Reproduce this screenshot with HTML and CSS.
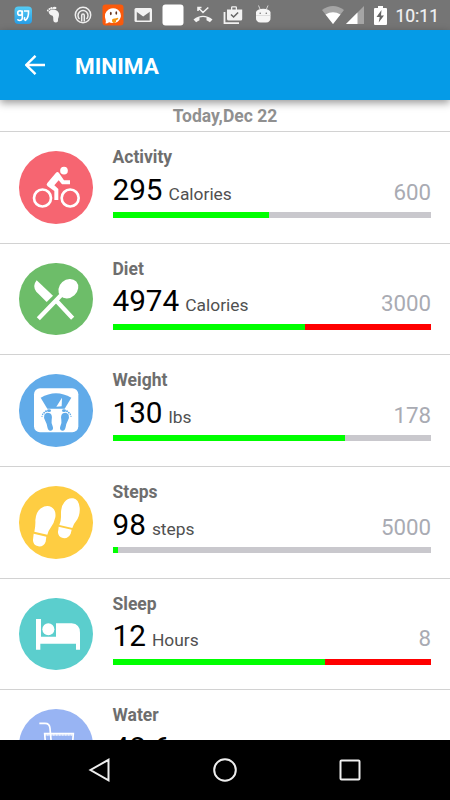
FILE: index.html
```html
<!DOCTYPE html>
<html lang="en">
<head>
  <meta charset="UTF-8">
  <title>Minima</title>
  <link rel="stylesheet" href="styles.css">
</head>
<body>
  <!-- status bar -->
  <div class="status">
    <div class="notifications">
      <svg viewBox="0 0 30 30"><defs><linearGradient id="blue" x2="0" y2="1"><stop stop-color="#55ccf5"/><stop offset="1" stop-color="#279de6"/></linearGradient></defs><rect x="6.500" y="6.500" width="17.500" height="17.500" rx="4" fill="url(#blue)"/><circle cx="12" cy="13" r="2.300" fill="none" stroke="#fff" stroke-width="1.600"/><path d="M14.300 10.500v7.500q-.3 2.500-2.800 2.500-1.500 0-2-1.200M16 11h4.500q.3 7-3 9.300-2-.8-.5-3" fill="none" stroke="#fff" stroke-width="1.600"/></svg>
      <svg viewBox="0 0 30 30" fill="#f2f2f2"><path d="M10.500 11.500q3-2.800 7-1.500 3.700 1.400 3.500 5-.2 2-1 4 .5 3.500-2.200 3.500-2.600 0-2.500-3 .2-2.500-.7-3.800-3.300-.5-4.100-4.200z"/><circle cx="9.800" cy="10.500" r=".9"/><circle cx="11.500" cy="9" r="1"/><circle cx="13.500" cy="8.200" r="1.200"/><ellipse cx="16.600" cy="8" rx="1.900" ry="1.300"/></svg>
      <svg viewBox="0 0 30 30" fill="none" stroke="#eee" stroke-width="1.500"><circle cx="15" cy="15" r="7.700"/><path d="M11.500 19a5 5 0 1 1 7 0"/><path d="M13.700 21.500v-6q0-1.500 1.300-1.500t1.300 1.500v6"/></svg>
      <svg viewBox="0 0 30 30"><rect x="4.500" y="4.500" width="21" height="21" rx="3" fill="#fa5a0c"/><path d="M7.500 23.500q.7-2 .1-3.700-2.200-7 3-10.300 4.700-2.500 9 0 4.500 3.300 2.800 8.500-2 5.300-8 5-2 0-3.300-.7-1.600 1.200-3.600 1.200z" fill="#fff"/><ellipse cx="12.800" cy="13.500" rx=".9" ry="1.700" fill="#68341c"/><ellipse cx="18.300" cy="13" rx=".9" ry="1.700" fill="#68341c"/><path d="M14 20q0-1.800 3-1.500l3-.7q1 1.200-.7 2l-1.300.7q.5 2.200-2 2.500Q14 23 14 20" fill="#f8960e"/></svg>
      <svg viewBox="0 0 30 30"><rect x="6.500" y="8" width="17.500" height="14" rx="1.500" fill="#f2f2f2"/><path d="M8.800 20.500V10.500l6.400 5 6.500-5v10z" fill="#757575"/><path d="M7.500 9.500l7.700 5.700 7.700-5.700" fill="none" stroke="#f2f2f2" stroke-width="2.200"/></svg>
      <svg viewBox="0 0 30 30"><rect x="4.500" y="4.500" width="21" height="21" rx="3" fill="#fff"/></svg>
      <svg viewBox="0 0 30 30"><path d="M5.500 19.500q9.500-7.500 19 0l-2.600 2.800q-1.500-1.300-3.400-2.100V17.500q-3.500-1-7 0v2.700q-1.900.8-3.400 2.100z" fill="#f2f2f2"/><path d="M10 11V7.500h3.500M10.300 7.800l4.700 4.700 5.300-5" fill="none" stroke="#f2f2f2" stroke-width="1.600"/></svg>
      <svg viewBox="0 0 30 30"><path fill-rule="evenodd" d="M9 9.500h4V7.500q0-1.300 1.300-1.300h3.400Q19 6.200 19 7.500v2h5.200V19q0 1.500-1.500 1.500h-12Q9 20.500 9 19zm5.300 0h3.400v-2h-3.400z" fill="#f2f2f2"/><path d="M6.500 12v11.200H21" fill="none" stroke="#f2f2f2" stroke-width="1.800"/><path d="M13 14.500l2.600 2.500 4.500-4.500" fill="none" stroke="#666" stroke-width="1.600"/></svg>
      <svg viewBox="0 0 30 30"><path d="M10.500 5.500l1.700 4M20 5.500l-1.700 4" stroke="#d5d5d5" stroke-width="1"/><path d="M8 16V12q1-3 7.200-3.200 6.300.2 7.300 3.200v6q.2 1.800-1 3-1.200 1.500-3.500 1.500h-5.500q-2.300 0-3.500-1.500-1.200-1.200-1-3z" fill="#f5f5f5"/><path d="M8 15.500h14.500" stroke="#ccc" stroke-width=".6"/><circle cx="12.200" cy="13.300" r=".8" fill="#777"/><circle cx="18.300" cy="13.300" r=".8" fill="#777"/></svg>
    </div>
    <div class="system">
      <svg class="wifi" viewBox="0 0 22 18"><path d="M0 4Q11-4 22 4L11 18z" fill="#a5a5a5"/><path d="M3.500 8.500q7.500-4.500 15 0L11 18z" fill="#fff"/></svg>
      <svg class="signal" viewBox="0 0 18 18"><path d="M18 0v18H0z" fill="#a5a5a5"/><path d="M11.500 6.500V18H0z" fill="#fff"/></svg>
      <svg class="battery" viewBox="0 0 13 19"><path d="M1 2h3V0h5v2h3q1 0 1 1v15q0 1-1 1H1q-1 0-1-1V3q0-1 1-1z" fill="#fff"/><path d="M7.500 4L2.500 11h3.200l-1 5.500 5.300-7H7z" fill="#666"/></svg>
      <span class="clock">10:11</span>
    </div>
  </div>

  <header class="toolbar">
    <svg viewBox="0 0 20 20"><path d="M20 10H1.500M10.500.8L1.300 10l9.200 9.200" fill="none" stroke="#fff" stroke-width="2.400"/></svg>
    <h1>MINIMA</h1>
  </header>

  <main>
    <div class="date">Today,Dec 22</div>

    <div class="row">
      <svg class="icon activity" viewBox="57 47 222 218" fill="#fff">
        <g fill="none" stroke="#fff" stroke-width="8"><circle cx="127.500" cy="188" r="25.500"/><circle cx="210.500" cy="188" r="25.500"/></g>
        <circle cx="192" cy="106" r="11.500"/>
        <path d="M168 112q5-4 9 1l15 22h18v12h-24l-10-12-13 15 12 11v33h-12v-27l-20-14q-6-5-1-10z"/>
      </svg>
      <div class="info">
        <div class="name">Activity</div>
        <div class="figures"><span class="value">295</span><span class="unit">Calories</span><span class="goal">600</span></div>
        <div class="bar"><div class="done" style="width: 49%"></div></div>
      </div>
    </div>

    <div class="row">
      <svg class="icon diet" viewBox="57 37 222 218" fill="#fff">
        <path d="M115 204l68-70M167 148l51 55" fill="none" stroke="#fff" stroke-width="13"/>
        <path d="M110 89l49 46-19 19-31-31q-13-17 1-34z"/>
        <ellipse cx="205" cy="114" rx="32" ry="27" transform="rotate(-42 205 114)"/>
      </svg>
      <div class="info">
        <div class="name">Diet</div>
        <div class="figures"><span class="value">4974</span><span class="unit">Calories</span><span class="goal">3000</span></div>
        <div class="bar"><div class="done" style="width: 60.300%"></div><div class="over" style="width: 39.700%"></div></div>
      </div>
    </div>

    <div class="row">
      <svg class="icon weight" viewBox="57 42 222 218">
        <rect x="102" y="85" width="133" height="132" rx="18" fill="#fff"/>
        <g fill="#61abe9">
          <path d="M122 113q46-27 92 0l-20 33h-52z"/>
          <g id="foot">
            <path d="M133 164q7-9 17-4 8 5 5 20-2 9 3 19 4 12-6 13-8 1-10-11-1-9-6-18-6-11-3-19z"/>
            <ellipse cx="147" cy="152" rx="6" ry="4"/><circle cx="138" cy="154" r="3"/><circle cx="132.500" cy="158" r="2.700"/><circle cx="128" cy="163" r="2.400"/><circle cx="126" cy="169" r="2"/>
          </g>
          <use href="#foot" transform="matrix(-1 0 0 1 339 0)"/>
        </g>
        <path d="M186 113l-1 26-16 1z" fill="#fff"/>
      </svg>
      <div class="info">
        <div class="name">Weight</div>
        <div class="figures"><span class="value">130</span><span class="unit">lbs</span><span class="goal">178</span></div>
        <div class="bar"><div class="done" style="width: 73%"></div></div>
      </div>
    </div>

    <div class="row">
      <svg class="icon steps" viewBox="57 47 222 218" fill="#fff">
        <path d="M103 184q4-18 3-34 2-26 17-36 17-12 32-3 14 9 11 30-3 18-16 34-6 7-8 18zM101 190l38 9-2 15q-6 16-22 14-17-4-16-20z"/>
        <path d="M178 164q6-13 5-30-1-25 10-38 11-15 27-12 16 3 19 28 2 23-11 41-8 9-11 20zM176 169l39 9-3 12q-8 16-23 13-19-5-14-25z"/>
      </svg>
      <div class="info">
        <div class="name">Steps</div>
        <div class="figures"><span class="value">98</span><span class="unit">steps</span><span class="goal">5000</span></div>
        <div class="bar"><div class="done" style="width: 1.700%"></div></div>
      </div>
    </div>

    <div class="row">
      <svg class="icon sleep" viewBox="57 37 222 218" fill="#fff">
        <path d="M108 100h15v53h45v-40h47q25 2 25 28v51h-12v-18H121v18h-13z"/>
        <circle cx="145" cy="131" r="18"/>
      </svg>
      <div class="info">
        <div class="name">Sleep</div>
        <div class="figures"><span class="value">12</span><span class="unit">Hours</span><span class="goal">8</span></div>
        <div class="bar"><div class="done" style="width: 66.700%"></div><div class="over" style="width: 33.300%"></div></div>
      </div>
    </div>

    <div class="row">
      <svg class="icon water" viewBox="57 71 222 218" fill="none" stroke="#fff" stroke-width="5">
        <path d="M118 114h17q14 0 15 15l9 100M134 145h86l-8 100h-70z"/>
        <path d="M136 149h82" stroke-dasharray="3 1.500"/>
      </svg>
      <div class="info">
        <div class="name">Water</div>
        <div class="figures"><span class="value">48.6</span></div>
      </div>
    </div>
  </main>

  <nav class="navbar">
    <svg viewBox="0 0 24 24"><path d="M20.500 1.800v20.500L2.500 12z"/></svg>
    <svg viewBox="0 0 24 24"><circle cx="12" cy="12" r="10.800"/></svg>
    <svg viewBox="0 0 24 24"><rect x="2.500" y="2.500" width="19" height="19" rx="1"/></svg>
  </nav>
</body>
</html>
```
FILE: styles.css
```css
* {
  box-sizing: border-box;
}
body {
  margin: 0;
  height: 800px;
  display: flex;
  flex-direction: column;
  overflow: hidden;
  background: #fff;
  font-family: Roboto, sans-serif;
}
svg {
  display: block;
  flex-shrink: 0;
}
.status {
  display: flex;
  justify-content: space-between;
  flex-shrink: 0;
  height: 30px;
  padding: 0 11px 0 7.5px;
  background: #757575;
}
.notifications {
  display: flex;
}
.notifications svg {
  width: 30px;
  height: 30px;
}
.system {
  display: flex;
  align-items: center;
}
.wifi {
  width: 22px;
  height: 18px;
  margin-right: 2px;
}
.signal {
  width: 18px;
  height: 18px;
  margin-right: 10px;
}
.battery {
  width: 13px;
  height: 19px;
  margin-right: 8px;
}
.clock {
  padding-top: 2px;
  font-size: 17.5px;
  line-height: 30px;
  -webkit-text-stroke: 0.2px #f2f2f2;
  color: #f2f2f2;
}
.toolbar {
  display: flex;
  align-items: center;
  flex-shrink: 0;
  height: 70px;
  padding-left: 25px;
  background: #059be7;
  box-shadow: 0 3px 8px rgba(0, 0, 0, 0.4);
  z-index: 1;
}
.toolbar svg {
  width: 20px;
  height: 20px;
}
.toolbar h1 {
  margin: 2px 0 0 30px;
  font-size: 22.5px;
  font-weight: 700;
  color: #fff;
}
main {
  flex: 1;
  min-height: 0;
  overflow: hidden;
}
.date {
  height: 31px;
  padding-top: 1px;
  line-height: 31px;
  text-align: center;
  font-size: 17.5px;
  font-weight: 700;
  color: #909090;
}
.row {
  display: flex;
  height: 111.7px;
  padding: 0 19px;
  border-top: 1px solid #d2d2d2;
}
.icon {
  width: 74px;
  height: 72.7px;
  margin: 19px 19.5px 0 0;
  border-radius: 50%;
}
.activity { background: #f66571; }
.diet { background: #6dbd69; }
.weight { background: #61abe9; }
.steps { background: #fecd42; }
.sleep { background: #5bcecd; }
.water { background: #98b4f3; }
.info {
  flex: 1;
  padding-top: 15px;
}
.name {
  font-size: 17.5px;
  font-weight: 700;
  line-height: 20px;
  color: #6e6e6e;
}
.figures {
  display: flex;
  align-items: baseline;
  height: 45px;
  padding-top: 4.5px;
  line-height: 36px;
}
.value {
  font-size: 29.7px;
  color: #000;
}
.unit {
  margin-left: 6px;
  font-size: 17.4px;
  color: #505050;
}
.goal {
  margin-left: auto;
  font-size: 22.3px;
  color: #a9abb3;
}
.bar {
  display: flex;
  height: 6px;
  background: #c9c8cd;
}
.done {
  background: #00ff00;
}
.over {
  background: #ff0000;
}
.navbar {
  display: flex;
  justify-content: center;
  align-items: center;
  gap: 101px;
  flex-shrink: 0;
  height: 60px;
  background: #000;
}
.navbar svg {
  width: 24px;
  height: 24px;
  fill: none;
  stroke: #eee;
  stroke-width: 2;
}
```
